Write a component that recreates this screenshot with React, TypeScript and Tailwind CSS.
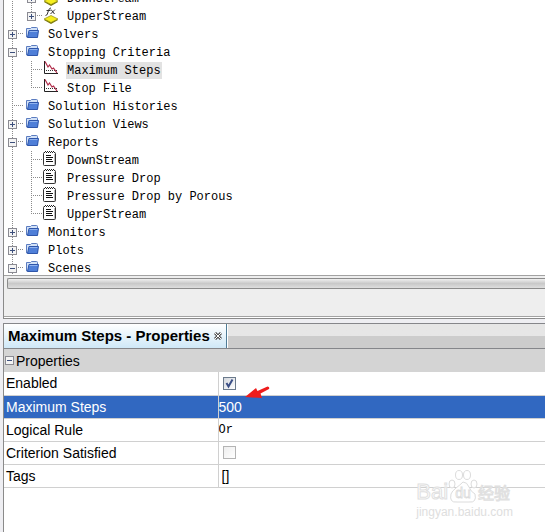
import { useState } from 'react';
import type { ReactNode } from 'react';

type IconType = 'folder' | 'fx' | 'plot' | 'report';

interface TreeNode {
  label: string;
  icon: IconType;
  open?: boolean;
  expandable?: boolean;
  last?: boolean;
  level: 1 | 2;
}

const NODES: TreeNode[] = [
  { label: 'DownStream', icon: 'fx', level: 2, expandable: true },
  { label: 'UpperStream', icon: 'fx', level: 2, expandable: true, last: true },
  { label: 'Solvers', icon: 'folder', level: 1, expandable: true },
  { label: 'Stopping Criteria', icon: 'folder', level: 1, expandable: true, open: true },
  { label: 'Maximum Steps', icon: 'plot', level: 2 },
  { label: 'Stop File', icon: 'plot', level: 2, last: true },
  { label: 'Solution Histories', icon: 'folder', level: 1 },
  { label: 'Solution Views', icon: 'folder', level: 1, expandable: true },
  { label: 'Reports', icon: 'folder', level: 1, expandable: true, open: true },
  { label: 'DownStream', icon: 'report', level: 2 },
  { label: 'Pressure Drop', icon: 'report', level: 2 },
  { label: 'Pressure Drop by Porous', icon: 'report', level: 2 },
  { label: 'UpperStream', icon: 'report', level: 2, last: true },
  { label: 'Monitors', icon: 'folder', level: 1, expandable: true },
  { label: 'Plots', icon: 'folder', level: 1, expandable: true },
  { label: 'Scenes', icon: 'folder', level: 1, expandable: true, open: true },
];

function Expander({ open }: { open?: boolean }) {
  return (
    <svg width="9" height="9" viewBox="0 0 9 9" shapeRendering="crispEdges">
      <rect x="0.5" y="0.5" width="8" height="8" fill="#f4f4f4" stroke="#8b8b93" />
      <path d={open ? 'M2 4.5h5' : 'M2 4.5h5M4.5 2v5'} stroke="#3c4f7c" />
    </svg>
  );
}

// Dotted connector lines for one indent level
function Guide({ branch, last }: { branch?: boolean; last?: boolean }) {
  return (
    <svg width="19" height="18" viewBox="0 0 19 18" shapeRendering="crispEdges" stroke="#8a8a8a" strokeDasharray="1 1">
      <path d={last ? 'M8.5 0v9' : 'M8.5 0v18'} />
      {branch && <path d="M10 8.5h9" />}
    </svg>
  );
}

function FolderIcon() {
  return (
    <svg width="13" height="14" viewBox="0 0 13 14">
      <path d="M.5 10V1.500H4.500L5.500 .5H10.500Q11.500 .5 11.500 1.500V10Z" fill="#d3e2f7" stroke="#5b7cc0" />
      <path d="M3 3.500H12.500L11.500 10.500H1.500Z" fill="#4f7fd8" stroke="#2f56aa" />
      <path d="M3.500 4.500H11.500" stroke="#8fb2ee" />
    </svg>
  );
}

function FxIcon() {
  return (
    <svg width="16" height="18" viewBox="0 0 16 18">
      <path d="M1 13L8 9L15 13L8 17Z" fill="#77740c" />
      <path d="M1 12L8 8.500L15 12L8 15.500Z" fill="#f6ee1e" stroke="#8d8a12" strokeWidth=".7" />
      <path d="M2.500 8.500Q4.500 8.500 5 5T8 .8M3.500 3.500H7.500M8 2.500L11.500 7M12 2.500L7.500 7" fill="none" stroke="#333" />
    </svg>
  );
}

function PlotIcon() {
  return (
    <svg width="16" height="18" viewBox="0 0 16 18">
      <path d="M1.500 0V12.500H15" fill="none" stroke="#222" />
      <path d="M3 9.500H14" stroke="#333" strokeDasharray="1 1" />
      <path d="M2 .5L5 6L6.500 4L9 8L10.500 7L14 12" fill="none" stroke="#b02a48" strokeWidth="1.200" />
    </svg>
  );
}

function ReportIcon() {
  return (
    <svg width="13" height="18" viewBox="0 0 13 18">
      <rect x=".5" y="1.500" width="12" height="13" rx="1" fill="#fff" stroke="#333" />
      <path d="M2 .5H12" stroke="#222" strokeDasharray="1 1" />
      <path d="M1 1.500H12" stroke="#fff" />
      <path d="M1 1.500H12" stroke="#222" strokeDasharray="1 1" />
      <path d="M3 4.500H8M3 6.500H10M3 8.500H9M3 10.500H10" stroke="#111" />
      <path d="M11.500 3V14" stroke="#bbb" />
    </svg>
  );
}

const ICONS: Record<IconType, ReactNode> = {
  folder: <FolderIcon />,
  fx: <FxIcon />,
  plot: <PlotIcon />,
  report: <ReportIcon />,
};

function TreeRow({ node, selected, onSelect }: { node: TreeNode; selected: boolean; onSelect: () => void }) {
  const child = node.level === 2;
  return (
    <li className="flex h-[18px] items-center">
      {child && <Guide />}
      <div className="grid w-[19px] shrink-0">
        <div className="col-start-1 row-start-1">
          <Guide branch last={node.last} />
        </div>
        {node.expandable && (
          <button
            aria-label={`Toggle ${node.label}`}
            className="col-start-1 row-start-1 ml-1 size-[9px] self-center"
          >
            <Expander open={node.open} />
          </button>
        )}
      </div>
      <span className={child ? 'flex w-6 shrink-0 pl-px' : 'flex w-6 shrink-0 pl-[3px]'}>{ICONS[node.icon]}</span>
      <button
        onClick={onSelect}
        className={
          selected
            ? 'h-[17px] bg-[#e2e2e2] px-px whitespace-nowrap leading-[18px]'
            : 'h-[17px] px-px whitespace-nowrap leading-[18px]'
        }
      >
        {node.label}
      </button>
    </li>
  );
}

function PropertyCheckbox({ id, checked, disabled }: { id: string; checked?: boolean; disabled?: boolean }) {
  return (
    <div className="grid w-[13px]">
      <input
        id={id}
        type="checkbox"
        defaultChecked={checked}
        disabled={disabled}
        className="peer col-start-1 row-start-1 size-[13px] appearance-none border border-[#6b7a8c] bg-gradient-to-br from-[#d4d8de] to-white disabled:border-[#b4b4b4] disabled:from-[#eeeeee]"
      />
      <svg
        width="13"
        height="13"
        viewBox="0 0 13 13"
        className="pointer-events-none invisible col-start-1 row-start-1 peer-checked:visible"
      >
        <path d="M3.500 6L5.500 9.500L9.500 2.500" fill="none" stroke="#3b4f86" strokeWidth="2" />
      </svg>
    </div>
  );
}

function PropertyRow({ id, label, selected, children }: { id: string; label: string; selected?: boolean; children: ReactNode }) {
  return (
    <tr className={selected ? 'h-[23px] border-b border-[#d0d0d0] bg-[#3168c1] text-white' : 'h-[23px] border-b border-[#d0d0d0]'}>
      <th scope="row" className="border-r border-[#d0d0d0] p-0 pl-[2px] text-left font-normal">
        <label htmlFor={id} className="block">{label}</label>
      </th>
      <td className="p-0">{children}</td>
    </tr>
  );
}

function Watermark() {
  return (
    <div className="pointer-events-none absolute right-8 bottom-3 text-white">
      <div className="flex items-end [-webkit-text-stroke:1px_#e0e0e0]">
        <span className="text-[22px] leading-6">Bai</span>
        <svg width="30" height="34" viewBox="0 0 30 34" fill="#fff" stroke="#dcdcdc">
          <ellipse cx="4" cy="14" rx="3" ry="4" />
          <ellipse cx="11" cy="5" rx="3.500" ry="4.500" />
          <ellipse cx="19" cy="5" rx="3.500" ry="4.500" />
          <ellipse cx="26" cy="14" rx="3" ry="4" />
          <path d="M15 12Q19 12 21 17T27 24Q29 33 21 32H9Q1 33 3 24Q4 21 8 18T15 12Z" />
          <text x="15" y="28" textAnchor="middle" fontSize="14" strokeWidth=".8">du</text>
        </svg>
        <span className="font-['Noto_Sans_CJK_SC',sans-serif] text-[16px] leading-6">经验</span>
      </div>
      <div className="text-[12px] leading-4 text-[#dedede]">jingyan.baidu.com</div>
    </div>
  );
}

export default function App() {
  const [selected, setSelected] = useState(4);

  return (
    <div className="relative flex min-h-screen flex-col bg-[#eeeef2] pl-[3px] font-['Liberation_Sans',Arial,sans-serif] text-[14px] text-black">
      <section className="border-b border-l border-[#8a8a8a]">
        <div className="h-[275px] overflow-hidden bg-white">
          <ul className="-mt-[11px] font-['Liberation_Mono','Courier_New',monospace] text-[12px]">
            {NODES.map((node, i) => (
              <TreeRow key={i} node={node} selected={selected === i} onSelect={() => setSelected(i)} />
            ))}
          </ul>
        </div>
        <div className="border-y border-[#a2a2a2] bg-[#eeeeee] pt-[2px]">
          <div className="ml-[3px] h-[11px] rounded-l-[2px] border border-r-0 border-[#8c8c8c] bg-gradient-to-b from-[#f0f0f0] via-[#c9c9c9] to-[#dedede]" />
          <div className="h-[27px]" />
        </div>
        <div className="h-px bg-white" />
      </section>

      <section className="mt-1 flex grow flex-col border-l border-[#8a8a8a] bg-white">
        <header className="flex h-[26px] border-y border-[#85868a] bg-linear-to-b from-[#e6e6e6] from-50% to-[#cccccc] to-50%">
          <div className="flex items-center gap-1 border-r border-[#4f7c97] bg-gradient-to-b from-white to-[#cfe8f7] pr-1 pl-1">
            <h2 className="text-[15px] leading-5 font-bold">Maximum Steps - Properties</h2>
            <button aria-label="Close">
              <svg width="8" height="8" viewBox="0 0 8 8">
                <path d="M1 1L7 7M7 1L1 7" stroke="#555" strokeWidth="3" />
                <path d="M1 1L7 7M7 1L1 7" stroke="#fff" />
              </svg>
            </button>
          </div>
          <div className="w-px bg-white" />
        </header>
        <table className="w-full table-fixed border-collapse leading-[18px]">
          <colgroup>
            <col className="w-[214px]" />
            <col />
          </colgroup>
          <thead>
            <tr className="h-[23px] bg-[#d4d4d4]">
              <th colSpan={2} className="p-0 pl-px text-left font-normal">
                <button className="flex items-center gap-[2px]">
                  <Expander open />
                  Properties
                </button>
              </th>
            </tr>
          </thead>
          <tbody>
            <PropertyRow id="enabled" label="Enabled">
              <div className="pl-1">
                <PropertyCheckbox id="enabled" checked />
              </div>
            </PropertyRow>
            <PropertyRow id="max-steps" label="Maximum Steps" selected>
              <div className="relative flex">
                <input id="max-steps" defaultValue="500" className="w-full bg-transparent outline-none" />
                <svg width="25" height="14" viewBox="0 0 25 14" className="pointer-events-none absolute -top-3 left-[26px]">
                  <path d="M0 11L11 2L12.500 5L22.500 .5Q25 1 24 3L15.500 7.500L17 12Z" fill="#ee1c1c" />
                </svg>
              </div>
            </PropertyRow>
            <PropertyRow id="logical-rule" label="Logical Rule">
              <input
                id="logical-rule"
                defaultValue="Or"
                className="block w-full bg-transparent font-['Liberation_Mono','Courier_New',monospace] text-[12px] outline-none"
              />
            </PropertyRow>
            <PropertyRow id="satisfied" label="Criterion Satisfied">
              <div className="pl-1">
                <PropertyCheckbox id="satisfied" disabled />
              </div>
            </PropertyRow>
            <PropertyRow id="tags" label="Tags">
              <input id="tags" defaultValue="[]" className="block w-full bg-transparent pl-[3px] outline-none" />
            </PropertyRow>
          </tbody>
        </table>
      </section>
      <Watermark />
    </div>
  );
}
